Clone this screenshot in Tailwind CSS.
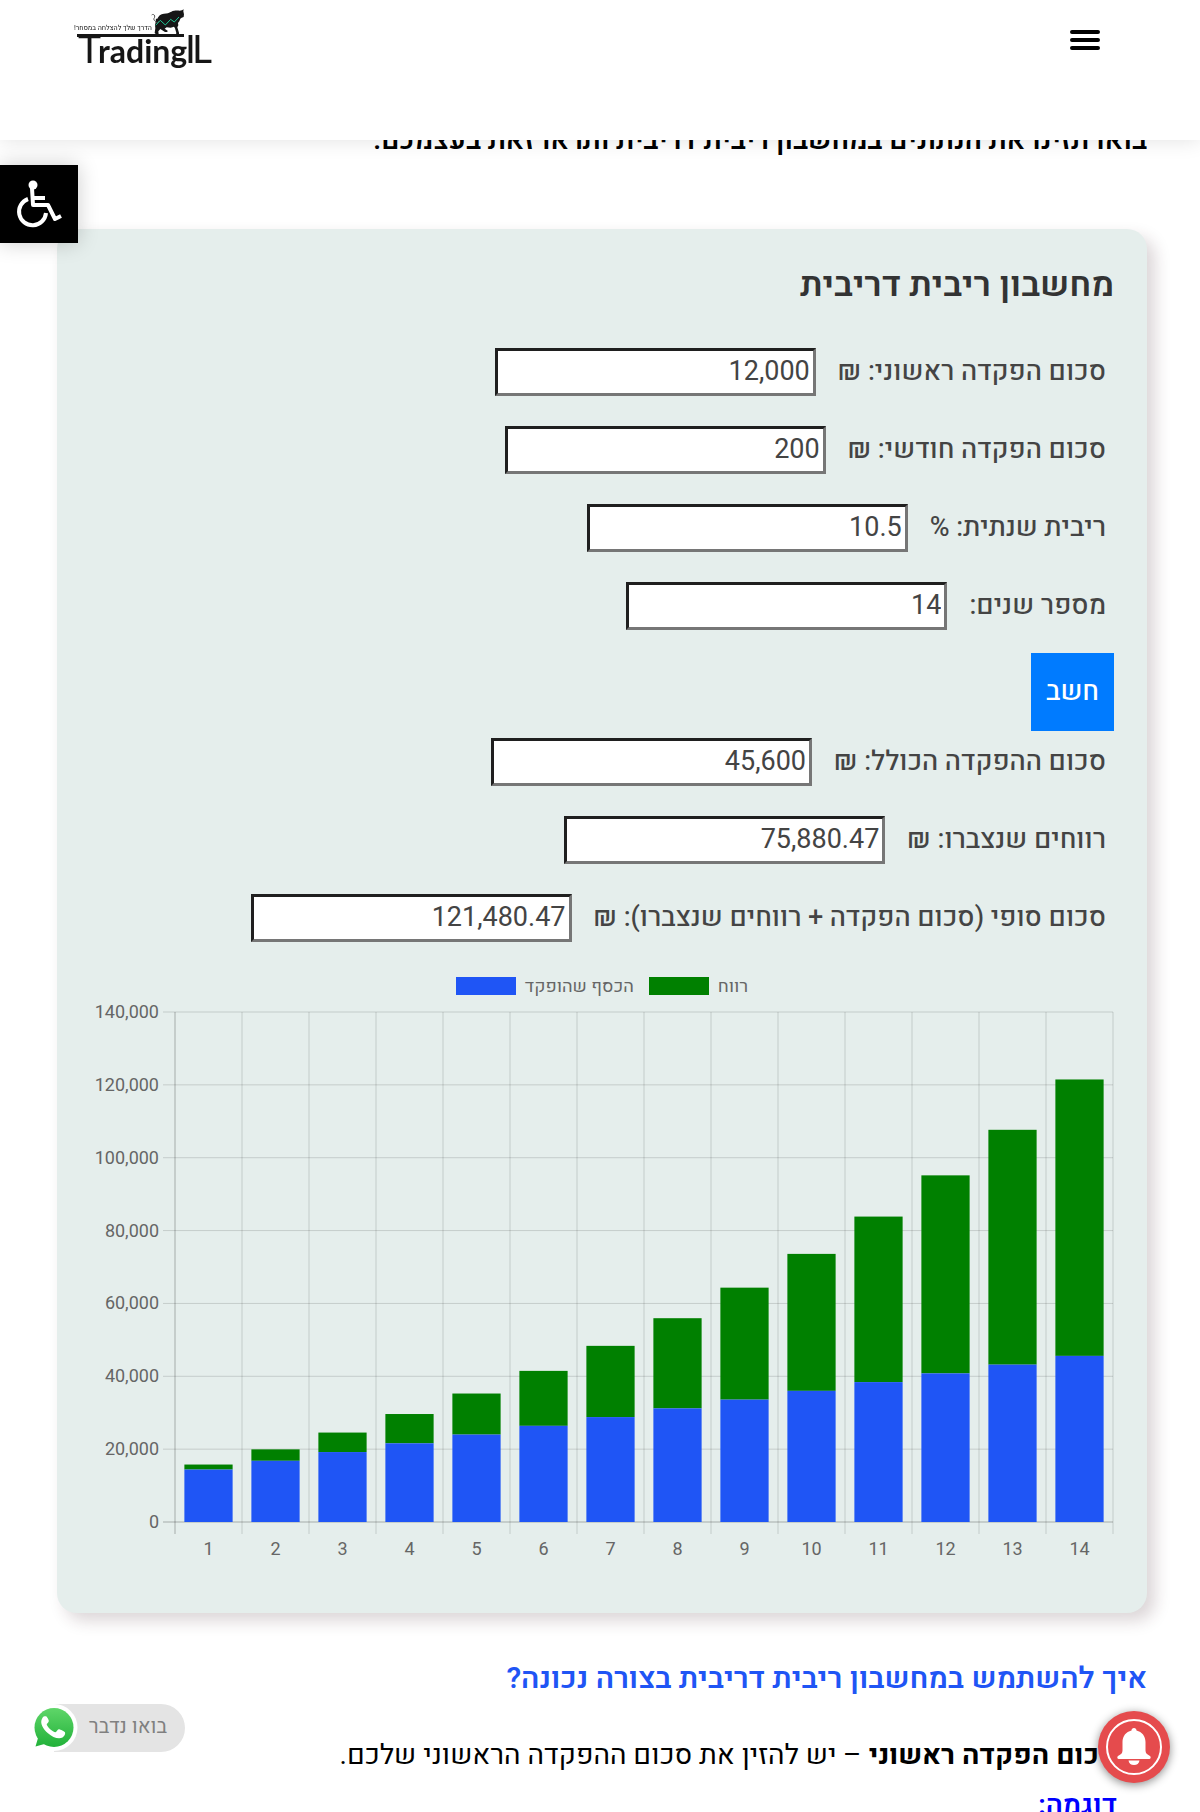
<!DOCTYPE html>
<html lang="he" dir="rtl">
<head>
    <meta charset="UTF-8">
    <meta name="viewport" content="width=device-width, initial-scale=1.0">
    <title>מחשבון ריבית דריבית - TradingIL</title>
    <script src="https://cdn.jsdelivr.net/npm/@tailwindcss/browser@4"></script>
</head>
<body class="h-screen overflow-hidden bg-white font-['Heebo','Roboto','Open_Sans',sans-serif] text-black">

<header class="fixed inset-x-0 top-0 z-20 flex h-[140px] items-start justify-between bg-white px-[77px] shadow-[0_0_20px_rgba(0,0,0,0.12)]">
    <button type="button" aria-label="תפריט" class="mt-1.5 mr-1 p-4">
        <svg class="h-9 w-9" viewBox="0 0 36 36" stroke="#000" stroke-width="4" stroke-linecap="round">
            <path d="M5 10h26M5 18h26M5 26h26"/>
        </svg>
    </button>
    <a href="#" aria-label="TradingIL" class="mt-2">
        <svg class="h-[64px] w-[134px] overflow-visible" viewBox="0 0 134 64" direction="ltr">
            <g fill="#161616">
                <g transform="scale(.3333) translate(-21 -24)">
                    <path d="M262 56c3-8 10-14 20-15 9-1 15-2 22-6 8-4 17-4 25-3l7-1 5-3-1 6 2 9-1 8-6 2-4 3-3 8-4 5 1 7-3 6 5 16v5h-9l1-4-4-14-3-5-10 3-12-1-6 4 9 6-1 4h-7l-14-9-6 7 1 9h-8l-4-4 2-14-1-10c2-7 2-13 3-19z"/>
                    <path d="M266 64c-3 8-8 2-13-3-5-6 3-7 1-13-1-5-6-6-9-3" fill="none" stroke="#555" stroke-width="3"/>
                    <path d="M257 76l14-15 15 14 16-17 11 8 14-15" fill="none" stroke="#1fc795" stroke-width="3"/>
                </g>
                <rect x="0" y="26" width="107" height="3"/>
                <text x="75" y="22" font-size="7" direction="rtl">הדרך שלך להצלחה במסחר!</text>
                <text y="55" font-family="Lato,sans-serif" font-size="39"><tspan x="1">T</tspan><tspan x="21" font-size="32" font-weight="700">rading</tspan><tspan x="108">I</tspan><tspan x="115">L</tspan></text>
            </g>
        </svg>
    </a>
</header>

<button type="button" aria-label="פתח סרגל נגישות" class="fixed top-[165px] left-0 z-10 flex h-[78px] w-[78px] items-center justify-center bg-black shadow-[0_0_20px_rgba(0,0,0,0.2)]">
    <svg class="h-12 w-12" viewBox="0 0 48 48" fill="none" stroke="#fff" stroke-width="4">
        <circle cx="18" cy="5" r="4.500" fill="#fff" stroke="none"/>
        <path d="M17 8l1 17h15l7 14 6-3" stroke-linejoin="round"/>
        <path d="M18 18h12"/>
        <path d="M13 19a13.500 13.500 0 1 0 18 14"/>
    </svg>
</button>

<main class="mx-auto max-w-[1200px] pr-[53px] pl-[57px]">
    <p class="pt-[120px] text-[28px] leading-[42px] font-semibold">בואו תזינו את הנתונים במחשבון ריבית דריבית ותראו זאת בעצמכם.</p>

    <section class="mt-[67px] rounded-[20px] bg-[#e5eeec] px-[33px] pt-8 pb-13 shadow-[8px_8px_16px_rgba(60,30,40,0.18)]">
        <h2 class="text-[35px] leading-12 font-semibold text-[#333]">מחשבון ריבית דריבית</h2>

        <form id="calcForm" class="mt-6 text-[27px] text-[#444]">
            <div class="flex h-[78px] items-center gap-[22px] pr-2">
                <label for="initial" class="font-medium">סכום הפקדה ראשוני: ₪</label>
                <input id="initial" value="12,000" class="h-12 w-[321px] border-3 border-t-[#1f1f1f] border-r-[#767676] border-b-[#767676] border-l-[#1f1f1f] bg-white px-[3px] pb-0.5">
            </div>
            <div class="flex h-[78px] items-center gap-[22px] pr-2">
                <label for="monthly" class="font-medium">סכום הפקדה חודשי: ₪</label>
                <input id="monthly" value="200" class="h-12 w-[321px] border-3 border-t-[#1f1f1f] border-r-[#767676] border-b-[#767676] border-l-[#1f1f1f] bg-white px-[3px] pb-0.5">
            </div>
            <div class="flex h-[78px] items-center gap-[22px] pr-2">
                <label for="rate" class="font-medium">ריבית שנתית: %</label>
                <input id="rate" value="10.5" class="h-12 w-[321px] border-3 border-t-[#1f1f1f] border-r-[#767676] border-b-[#767676] border-l-[#1f1f1f] bg-white px-[3px] pb-0.5">
            </div>
            <div class="flex h-[78px] items-center gap-[22px] pr-2">
                <label for="years" class="font-medium">מספר שנים:</label>
                <input id="years" value="14" class="h-12 w-[321px] border-3 border-t-[#1f1f1f] border-r-[#767676] border-b-[#767676] border-l-[#1f1f1f] bg-white px-[3px] pb-0.5">
            </div>
            <button type="submit" class="mt-2 -mb-2 flex h-[78px] w-[83px] items-center justify-center bg-[#007bff] font-medium text-white">חשב</button>
            <div class="flex h-[78px] items-center gap-[22px] pr-2">
                <label for="deposits" class="font-medium">סכום ההפקדה הכולל: ₪</label>
                <input id="deposits" readonly class="h-12 w-[321px] border-3 border-t-[#1f1f1f] border-r-[#767676] border-b-[#767676] border-l-[#1f1f1f] bg-white px-[3px] pb-0.5">
            </div>
            <div class="flex h-[78px] items-center gap-[22px] pr-2">
                <label for="profit" class="font-medium">רווחים שנצברו: ₪</label>
                <input id="profit" readonly class="h-12 w-[321px] border-3 border-t-[#1f1f1f] border-r-[#767676] border-b-[#767676] border-l-[#1f1f1f] bg-white px-[3px] pb-0.5">
            </div>
            <div class="flex h-[78px] items-center gap-[22px] pr-2">
                <label for="total" class="font-medium">סכום סופי (סכום הפקדה + רווחים שנצברו): ₪</label>
                <input id="total" readonly class="h-12 w-[321px] border-3 border-t-[#1f1f1f] border-r-[#767676] border-b-[#767676] border-l-[#1f1f1f] bg-white px-[3px] pb-0.5">
            </div>
        </form>

        <div class="mt-3.5 flex h-[30px] items-center justify-center gap-[15px] text-[18px] text-[#666]">
            <span class="flex items-center gap-[9px]">רווח<span class="h-[18px] w-[60px] bg-[#008000]"></span></span>
            <span class="flex items-center gap-[9px]">הכסף שהופקד<span class="h-[18px] w-[60px] bg-[#1f55f5]"></span></span>
        </div>
        <svg id="chart" class="block h-auto w-full overflow-visible" viewBox="0 0 1024 560" direction="ltr" font-size="18" fill="#666"></svg>
    </section>

    <h2 class="mt-[42px] text-[30px] leading-12 font-semibold text-[#1f55f5]">איך להשתמש במחשבון ריבית דריבית בצורה נכונה?</h2>
    <p class="mt-7 pr-[30px] text-[28px] leading-[50px]"><strong class="font-bold">סכום הפקדה ראשוני</strong> – יש להזין את סכום ההפקדה הראשוני שלכם.</p>
    <p class="pr-[30px] text-[28px] leading-[50px] font-semibold text-[#0000ff]">דוגמה:</p>
</main>

<a href="#" class="fixed top-[1704px] left-[30px] z-10 flex h-12 w-[155px] items-center rounded-full bg-[#e4e4e4] pr-[18px] pb-0.5 text-[20px] text-[#808080]">
    בואו נדבר
    <svg class="absolute top-0 left-0 h-12 w-12" viewBox="0 0 48 48">
        <defs>
            <linearGradient id="wa" x1="0" y1="4" x2="0" y2="44" gradientUnits="userSpaceOnUse">
                <stop offset="0" stop-color="#5fd669"/>
                <stop offset="1" stop-color="#20b038"/>
            </linearGradient>
        </defs>
        <path d="M0 0h24v48H0z" fill="#fff"/>
        <circle cx="24" cy="23.500" r="23.500" fill="#fff"/>
        <circle cx="24" cy="23.500" r="19.500" fill="url(#wa)"/>
        <path d="M6 31l2 3-2.500 8.500 9-2.400 4 1z" fill="url(#wa)"/>
        <path d="M17.200 13.500c-.5-1.100-1-1.200-1.800-1.200-1.200 0-2.200.4-3 1.600-3.300 5 1 11.300 5.600 15.300 4.500 4 10.500 6.500 14.500 4.300 2-1.200 3.100-3.500 2.500-5.200-.3-.7-4.900-2.800-5.600-3-.8-.2-1.300 0-1.800.8-.7 1-1.600 2.200-2.200 2.200-1.100 0-3.600-1.500-5.200-3-1.700-1.600-3.500-4-3.500-5 0-.9 2.100-2 2.100-3.400 0-.8-1.300-3-1.600-3.400z" fill="#fff"/>
    </svg>
</a>

<button type="button" aria-label="התראות" class="fixed top-[1711px] right-[30px] z-10 h-[72px] w-[72px] rounded-full bg-[#e54b4d] shadow-[0_2px_10px_rgba(0,0,0,0.45)]">
    <svg class="h-[72px] w-[72px]" viewBox="0 0 72 72">
        <circle cx="36" cy="36" r="27" fill="none" stroke="#fff" stroke-width="2"/>
        <path d="M36 17c1.500 0 2.500 1 2.500 2.400C44 20.700 47.500 25 47.500 31v8.500c0 2.500 1.500 4 4.500 5.500 1 .6 1 3-.5 3h-31c-1.500 0-1.500-2.400-.5-3 3-1.500 4.500-3 4.500-5.500V31c0-6 3.500-10.300 9-11.600 0-1.400 1-2.400 2.500-2.400zM30.500 49.500h11c-.5 3-2.500 4.500-5.500 4.500s-5-1.500-5.500-4.500z" fill="#fff"/>
    </svg>
</button>

<script>
    const form = document.getElementById('calcForm');
    const chart = document.getElementById('chart');

    const field = id => document.getElementById(id);
    const num = id => parseFloat(field(id).value.replace(/,/g, ''));
    const format = n => n.toLocaleString('en-US', { maximumFractionDigits: 2 });

    // plot area inside the svg
    const left = 85, right = 1023, top_ = 11, bottom = 521;

    function drawChart(rows) {
        const max = Math.ceil(rows[rows.length - 1].total / 20000) * 20000;
        const step = (right - left) / rows.length;
        const y = v => bottom - (bottom - top_) * v / max;
        let out = '';

        for (let v = 0; v <= max; v += 20000) {
            out += `<path d="M${left - 12} ${y(v)}H${right}" stroke="#000" stroke-opacity="${v ? 0.14 : 0.28}"/>`;
            out += `<text x="${left - 16}" y="${y(v) + 6}" text-anchor="end">${format(v)}</text>`;
        }
        for (let i = 0; i <= rows.length; i++) {
            const x = left + i * step;
            out += `<path d="M${x} ${top_}V${bottom + 12}" stroke="#000" stroke-opacity="${i ? 0.14 : 0.28}"/>`;
        }
        rows.forEach((row, i) => {
            const w = step * 0.72;
            const x = left + step * i + (step - w) / 2;
            out += `<rect x="${x}" y="${y(row.total)}" width="${w}" height="${y(row.deposits) - y(row.total)}" fill="#008000"/>`;
            out += `<rect x="${x}" y="${y(row.deposits)}" width="${w}" height="${bottom - y(row.deposits)}" fill="#1f55f5"/>`;
            out += `<text x="${x + w / 2}" y="${bottom + 33}" text-anchor="middle">${i + 1}</text>`;
        });
        chart.innerHTML = out;
    }

    function calculate() {
        const monthlyRate = Math.pow(1 + num('rate') / 100, 1 / 12) - 1;
        const rows = [];
        let total = num('initial');
        let deposits = total;

        for (let year = 1; year <= num('years'); year++) {
            for (let m = 0; m < 12; m++) {
                total = total * (1 + monthlyRate) + num('monthly');
                deposits += num('monthly');
            }
            rows.push({ deposits, total });
        }

        field('deposits').value = format(deposits);
        field('profit').value = format(total - deposits);
        field('total').value = format(total);
        drawChart(rows);
    }

    form.addEventListener('submit', function (event) {
        event.preventDefault();
        calculate();
    });
    calculate();
</script>
</body>
</html>
